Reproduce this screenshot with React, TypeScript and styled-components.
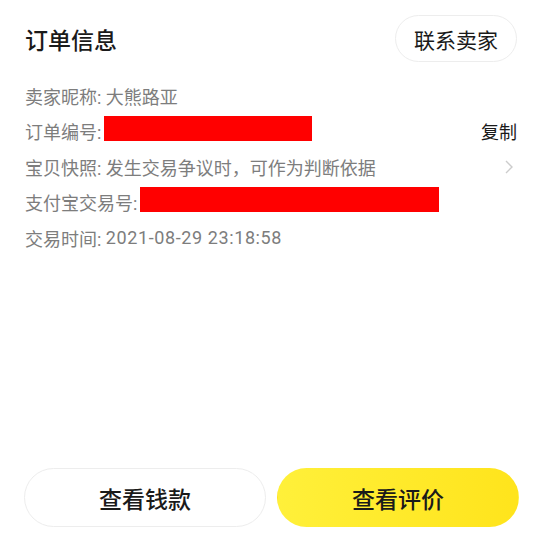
import React from "react";
import styled, { createGlobalStyle } from "styled-components";

const GlobalStyle = createGlobalStyle`
  html, body {
    margin: 0;
    padding: 0;
    background: #ffffff;
  }
  body {
    font-family: Roboto, "Noto Sans CJK SC", "Noto Sans", sans-serif;
  }
`;

const Page = styled.div`
  width: 540px;
  height: 540px;
  display: flex;
  flex-direction: column;
  box-sizing: border-box;
  background: #ffffff;
`;

const Header = styled.div`
  display: flex;
  align-items: center;
  justify-content: space-between;
  padding: 12px 23px 0 25px;
`;

const Title = styled.h1`
  margin: 6px 0 0;
  font-size: 23px;
  font-weight: 500;
  color: #1a1a1a;
  line-height: 47px;
`;

const PillButton = styled.button`
  height: 47px;
  padding: 0 18px;
  border: 1px solid #ededed;
  border-radius: 24px;
  background: #ffffff;
  font-family: inherit;
  font-size: 21px;
  color: #1a1a1a;
  cursor: pointer;
`;

const InfoList = styled.div`
  display: flex;
  flex-direction: column;
  padding: 13px 23px 0 25px;
`;

const Row = styled.div`
  display: flex;
  align-items: center;
  height: 35.5px;
  font-size: 18px;
  color: #7d7d7d;
  white-space: nowrap;
`;

const Label = styled.span`
  margin-right: 3px;
`;

const Stamp = styled.span`
  letter-spacing: 0.6px;
`;

const Redacted = styled.span<{ width: number }>`
  display: inline-block;
  width: ${(p) => p.width}px;
  height: 25px;
  background: #ff0000;
  margin-top: -5px;
`;

const Action = styled.span`
  margin-left: auto;
  color: #1a1a1a;
`;

const Chevron = styled.svg`
  margin-left: auto;
  margin-right: 4px;
`;

const Spacer = styled.div`
  flex: 1;
`;

const Footer = styled.div`
  display: flex;
  gap: 11px;
  padding: 0 21px 13px 24px;
`;

const FooterButton = styled.button<{ primary?: boolean }>`
  flex: 1;
  height: 59px;
  border-radius: 30px;
  border: 1px solid ${(p) => (p.primary ? "transparent" : "#ededed")};
  background: ${(p) =>
    p.primary ? "linear-gradient(90deg, #fff03a 0%, #ffe41c 100%)" : "#ffffff"};
  font-family: inherit;
  font-size: 23px;
  font-weight: 500;
  color: #1a1a1a;
  cursor: pointer;
`;

const App = () => {
  return (
    <Page>
      <GlobalStyle />
      <Header>
        <Title>订单信息</Title>
        <PillButton>联系卖家</PillButton>
      </Header>
      <InfoList>
        <Row>卖家昵称: 大熊路亚</Row>
        <Row>
          <Label>订单编号:</Label>
          <Redacted width={208} />
          <Action>复制</Action>
        </Row>
        <Row>
          宝贝快照: 发生交易争议时，可作为判断依据
          <Chevron width="8" height="14" viewBox="0 0 8 14">
            <path d="M1 1l6 6-6 6" fill="none" stroke="#cccccc" strokeWidth="1.4" />
          </Chevron>
        </Row>
        <Row>
          <Label>支付宝交易号:</Label>
          <Redacted width={299} />
        </Row>
        <Row>
          交易时间:&nbsp;<Stamp>2021-08-29 23:18:58</Stamp>
        </Row>
      </InfoList>
      <Spacer />
      <Footer>
        <FooterButton>查看钱款</FooterButton>
        <FooterButton primary>查看评价</FooterButton>
      </Footer>
    </Page>
  );
};

export default App;
